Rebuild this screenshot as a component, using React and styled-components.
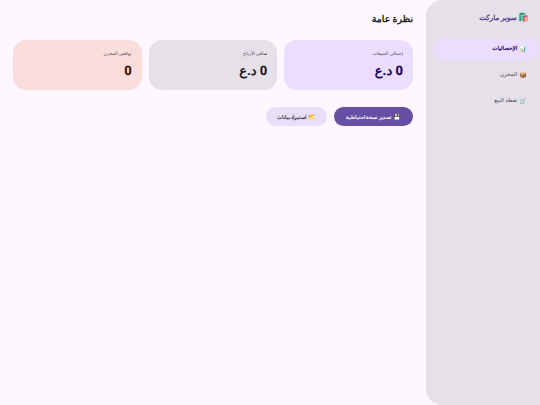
import styled, { createGlobalStyle } from "styled-components";

const GlobalStyle = createGlobalStyle`
  html, body {
    margin: 0;
    height: 100%;
  }
  body {
    background: #fef7ff;
    font-family: Roboto, sans-serif;
    text-rendering: geometricPrecision;
    color: #1d1b20;
  }
  #root {
    height: 100%;
  }
`;

const Layout = styled.div`
  display: flex;
  direction: rtl;
  width: 540px;
  height: 405px;
  overflow: hidden;
`;

const Sidebar = styled.aside`
  width: 114px;
  flex-shrink: 0;
  box-sizing: border-box;
  background: #e6e0e9;
  border-radius: 16px 0 0 16px;
  padding: 11px 0 0 0;
`;

const Logo = styled.div`
  display: flex;
  align-items: center;
  gap: 2px;
  height: 13px;
  padding: 0 10px 0 0;
  margin-bottom: 14px;
  font-size: 7.2px;
  font-weight: 700;
  color: #4f378b;
`;

const Emoji = styled.span`
  font-size: ${({ $size }) => $size || 6.2}px;
`;

const NavList = styled.nav`
  display: flex;
  flex-direction: column;
  gap: 4px;
  padding: 0 0 0 7px;
`;

const NavItem = styled.div`
  display: flex;
  align-items: center;
  gap: 2px;
  height: 22px;
  padding: 0 13px 0 0;
  border-radius: 11px;
  font-size: 5.6px;
  font-weight: ${({ $active }) => ($active ? 700 : 400)};
  color: ${({ $active }) => ($active ? "#21005d" : "#49454f")};
  background: ${({ $active }) => ($active ? "#eaddff" : "transparent")};
`;

const Main = styled.main`
  flex: 1;
  box-sizing: border-box;
  padding: 13px 13px 0;
`;

const Title = styled.h1`
  margin: 0 0 13px;
  height: 14px;
  line-height: 14px;
  font-size: 9.4px;
  font-weight: 700;
  color: #1d1b20;
`;

const Cards = styled.div`
  display: grid;
  grid-template-columns: repeat(3, 1fr);
  gap: 7px;
  margin-bottom: 17px;
`;

const Card = styled.div`
  box-sizing: border-box;
  height: 50px;
  padding: 10px 10px 0;
  border-radius: 13px;
  background: ${({ $bg }) => $bg};
  color: ${({ $fg }) => $fg};
`;

const CardLabel = styled.div`
  height: 10px;
  line-height: 10px;
  font-size: 4.6px;
  color: #49454f;
  margin-bottom: 3px;
`;

const CardValue = styled.div`
  height: 18px;
  line-height: 18px;
  font-size: 13px;
  font-weight: 800;
`;

const Actions = styled.div`
  display: flex;
  gap: 7px;
`;

const Button = styled.button`
  display: flex;
  align-items: center;
  justify-content: center;
  gap: 2px;
  width: ${({ $primary }) => ($primary ? 79 : 61)}px;
  height: 19px;
  padding: 0;
  border: none;
  border-radius: 10px;
  font-family: inherit;
  font-size: 5.2px;
  font-weight: 700;
  direction: rtl;
  background: ${({ $primary }) => ($primary ? "#6750a4" : "#e8def8")};
  color: ${({ $primary }) => ($primary ? "#ffffff" : "#1d192b")};
`;

export default function App() {
  return (
    <>
      <GlobalStyle />
      <Layout>
        <Sidebar>
          <Logo>
            <Emoji $size={9}>🛍️</Emoji>
            <span>سوبر ماركت</span>
          </Logo>
          <NavList>
            <NavItem $active>
              <Emoji>📊</Emoji>
              <span>الإحصائيات</span>
            </NavItem>
            <NavItem>
              <Emoji>📦</Emoji>
              <span>المخزن</span>
            </NavItem>
            <NavItem>
              <Emoji>🛒</Emoji>
              <span>نقطة البيع</span>
            </NavItem>
          </NavList>
        </Sidebar>
        <Main>
          <Title>نظرة عامة</Title>
          <Cards>
            <Card $bg="#eaddff" $fg="#21005d">
              <CardLabel>إجمالي المبيعات</CardLabel>
              <CardValue>0 د.ع</CardValue>
            </Card>
            <Card $bg="#e6e0e9" $fg="#1d1b20">
              <CardLabel>صافي الأرباح</CardLabel>
              <CardValue>0 د.ع</CardValue>
            </Card>
            <Card $bg="#f9dedc" $fg="#410e0b">
              <CardLabel>نواقص المخزن</CardLabel>
              <CardValue>0</CardValue>
            </Card>
          </Cards>
          <Actions>
            <Button $primary>
              <Emoji>💾</Emoji>
              <span>تصدير نسخة احتياطية</span>
            </Button>
            <Button>
              <Emoji>📂</Emoji>
              <span>استيراد بيانات</span>
            </Button>
          </Actions>
        </Main>
      </Layout>
    </>
  );
}
